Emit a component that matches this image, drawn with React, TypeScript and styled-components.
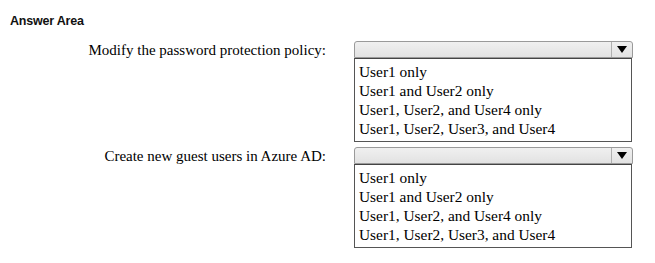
import React from "react";
import styled, { createGlobalStyle } from "styled-components";

const Global = createGlobalStyle`
  html, body { margin: 0; padding: 0; background: #fff; }
  body { width: 655px; height: 263px; overflow: hidden; }
`;

const Page = styled.div`
  padding: 14px 0 0 10px;
`;

const Title = styled.div`
  font-family: "Liberation Sans", Arial, sans-serif;
  font-weight: bold;
  font-size: 12.5px;
  line-height: 14px;
  color: #111;
  letter-spacing: -0.2px;
`;

const Grid = styled.div`
  display: grid;
  grid-template-columns: 316px 279px;
  column-gap: 28px;
  row-gap: 5px;
  margin-top: 13px;
`;

const Label = styled.div`
  font-family: "Liberation Serif", "Times New Roman", serif;
  font-size: 15px;
  color: #000;
  text-align: right;
  line-height: 17px;
  padding-top: 1px;
`;

const Dropdown = styled.div`
  display: flex;
  flex-direction: column;
`;

const SelectBar = styled.div`
  height: 15px;
  border: 1px solid #9a9a9a;
  border-radius: 3px 3px 0 0;
  background: linear-gradient(#f0f0f0, #e2e2e2);
  display: flex;
  justify-content: flex-end;
`;

const Arrow = styled.div`
  width: 20px;
  border-left: 1px solid #b0b0b0;
  display: flex;
  align-items: center;
  justify-content: center;
  &::after {
    content: "";
    border-left: 5px solid transparent;
    border-right: 5px solid transparent;
    border-top: 7px solid #000;
  }
`;

const List = styled.div`
  border: 1px solid #555;
  border-top: 1px solid #444;
  margin-right: 1px;
  padding: 3px 0 3px 4px;
  font-family: "Liberation Serif", "Times New Roman", serif;
  font-size: 15.4px;
  line-height: 19px;
  color: #000;
`;

const Option = styled.div`
  white-space: nowrap;
`;

const options = [
  "User1 only",
  "User1 and User2 only",
  "User1, User2, and User4 only",
  "User1, User2, User3, and User4",
];

const questions = [
  "Modify the password protection policy:",
  "Create new guest users in Azure AD:",
];

export default function App() {
  return (
    <>
      <Global />
      <Page>
        <Title>Answer Area</Title>
        <Grid>
          {questions.map((q) => (
            <React.Fragment key={q}>
              <Label>{q}</Label>
              <Dropdown>
                <SelectBar>
                  <Arrow />
                </SelectBar>
                <List>
                  {options.map((o) => (
                    <Option key={o}>{o}</Option>
                  ))}
                </List>
              </Dropdown>
            </React.Fragment>
          ))}
        </Grid>
      </Page>
    </>
  );
}
